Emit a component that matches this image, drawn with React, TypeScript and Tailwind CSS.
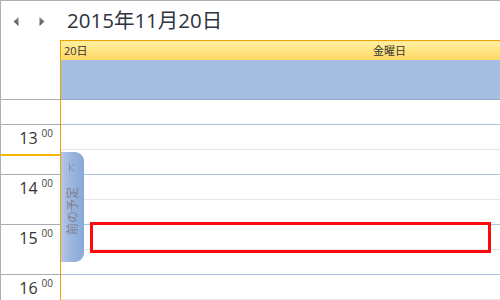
const font = { fontFamily: '"Open Sans", "Noto Sans CJK JP", sans-serif' }

const gutterHours = ['13', '14', '15', '16']

function Arrow({ dir }: { dir: 'left' | 'right' }) {
  return (
    <svg width="6" height="9" viewBox="0 0 6 9">
      <defs>
        <linearGradient id={`g-${dir}`} x1="0" y1="0" x2="0" y2="1">
          <stop offset="0" stopColor="#8a8a8a" />
          <stop offset="1" stopColor="#555" />
        </linearGradient>
      </defs>
      {dir === 'left' ? (
        <path d="M5.5 0 L0.5 4.5 L5.5 9 Z" fill={`url(#g-${dir})`} />
      ) : (
        <path d="M0.5 0 L5.5 4.5 L0.5 9 Z" fill={`url(#g-${dir})`} />
      )}
    </svg>
  )
}

export default function App() {
  return (
    <div
      className="relative flex h-[300px] w-[500px] flex-col overflow-hidden border-l border-t border-[#a9b0b8] bg-white text-[#333]"
      style={font}
    >
      {/* title bar */}
      <div className="flex h-[39px] shrink-0 items-center">
        <div className="flex w-[66px] items-center gap-[20px] pl-[12px] pt-[1px]">
          <Arrow dir="left" />
          <Arrow dir="right" />
        </div>
        <span className="text-[20.5px] leading-none text-[#2e3440]">2015年11月20日</span>
      </div>

      <div className="flex flex-1">
        {/* time gutter */}
        <div className="relative w-[59px] shrink-0">
          <div className="h-[60px] border-b border-[#a7adb5]" />
          <div className="h-[25px] border-b border-[#a7adb5]" />
          {gutterHours.map((h) => (
            <div key={h} className="flex h-[50px] justify-end gap-[4px] border-b border-[#a7adb5] pr-[7px] pt-[5px]">
              <span className="text-[16px] leading-none text-[#333]">{h}</span>
              <span className="-mt-[2px] text-[10px] leading-none text-[#444]">00</span>
            </div>
          ))}
          <div className="absolute left-0 top-[114px] h-[2px] w-[59px] bg-[#f5b400]" />
        </div>

        {/* day column */}
        <div className="relative w-[658px] shrink-0 border-l border-[#f0a000]">
          <div className="grid h-[20px] grid-cols-[1fr_auto_1fr] items-center border-t border-[#f0a000] bg-gradient-to-b from-[#fff0a0] to-[#ffd863] text-[11px] leading-none text-[#333]">
            <span className="pl-[3px]">20日</span>
            <span>金曜日</span>
            <span />
          </div>
          <div className="h-[40px] border-b border-[#93add3] bg-[#a5bfe0]" />
          {Array.from({ length: 8 }, (_, i) => (
            <div
              key={i}
              className={i % 2 === 0 ? 'h-[25px] border-b border-[#a9c2e4]' : 'h-[25px] border-b border-[#e4e6ee]'}
            />
          ))}

          {/* previous appointment tab */}
          <div className="absolute left-0 top-[112px] flex h-[110px] w-[23px] flex-col items-center rounded-r-[9px] bg-gradient-to-r from-[#b3c7e7] via-[#98b3dd] to-[#8ba9d8] pt-[11px]">
            <svg width="7" height="9" viewBox="0 0 7 9" fill="none" stroke="#8a8d9c" strokeWidth="1">
              <path d="M0.5 0.5 V8.5" />
              <path d="M5.5 0.5 L1.5 4.5 L5.5 8.5" />
            </svg>
            <div className="mt-[14px] flex h-[50px] w-[23px] items-center justify-center">
              <span className="-rotate-90 whitespace-nowrap text-[12px] leading-none text-[#7b7f8e]">前の予定</span>
            </div>
          </div>

          {/* highlight */}
          <div className="absolute left-[29px] top-[182px] h-[31px] w-[401px] border-[3px] border-[#ff0a0a]" />
        </div>
      </div>
    </div>
  )
}
